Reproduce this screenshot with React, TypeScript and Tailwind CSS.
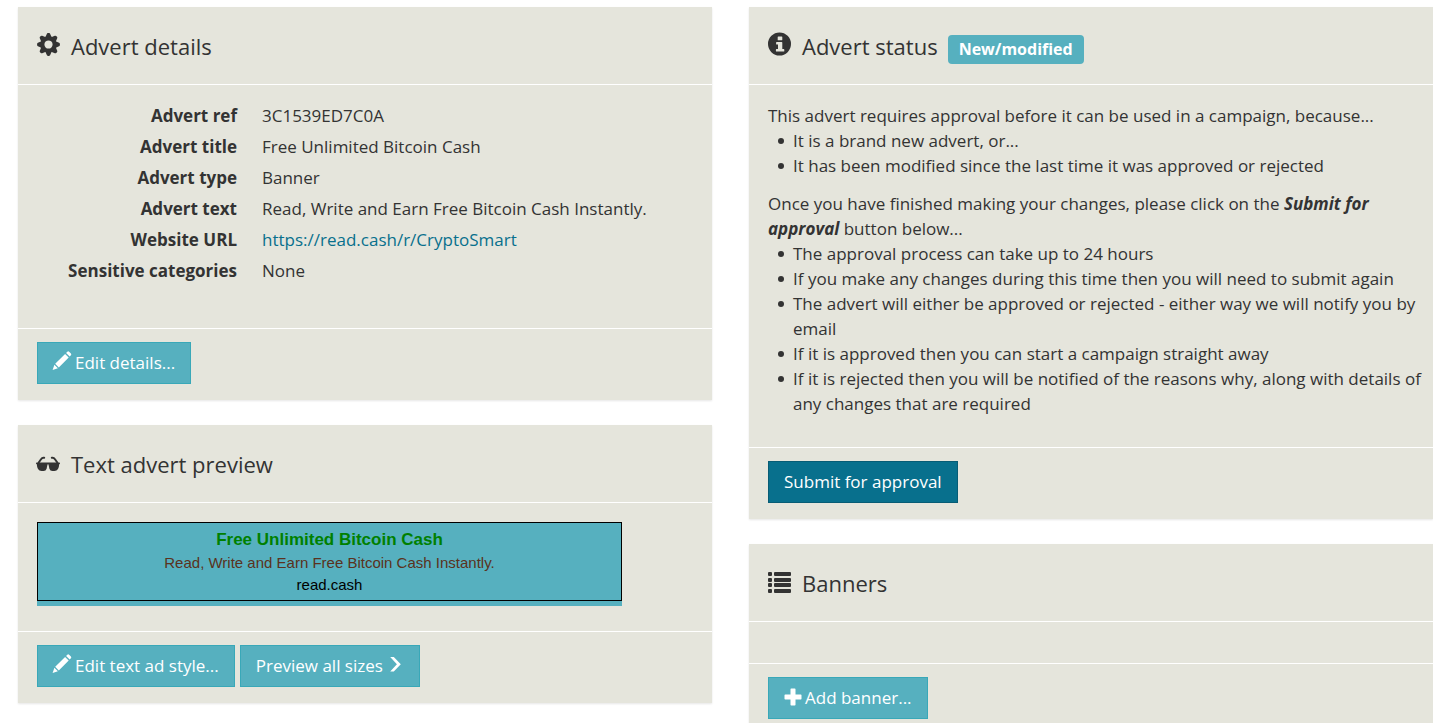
import type { ReactNode } from "react";

function CogIcon() {
  return (
    <svg viewBox="-11.5 -12.5 24 24" className="size-6 shrink-0" fill="currentColor" aria-hidden="true">
      {[0, 45, 90, 135, 180, 225, 270, 315].map((angle) => (
        <path key={angle} transform={`rotate(${angle})`} d="M-3.200-7-1.700-10.600Q-1.400-11.400-.6-11.400H.6Q1.400-11.400 1.700-10.600L3.200-7z" />
      ))}
      <circle r="6.200" fill="none" stroke="currentColor" strokeWidth="4.200" />
    </svg>
  );
}

function InfoIcon() {
  return (
    <svg viewBox="0 0 24 24" className="size-6 shrink-0" fill="currentColor" aria-hidden="true">
      <path
        fillRule="evenodd"
        d="M11.500 .5a11.500 11.500 0 1 0 0 23 11.500 11.500 0 0 0 0-23zM10.300 4.500h3.400q.6 0 .6.600v2.600q0 .6-.6.600h-3.400q-.6 0-.6-.6V5.100q0-.6.600-.6zM8.700 10h5q.6 0 .6.600v6.500h1.400q.6 0 .6.600v1.200q0 .6-.6.600H8.500q-.6 0-.6-.6v-1.200q0-.6.600-.6h1.500v-4.600H8.700q-.6 0-.6-.6v-1.300q0-.6.600-.6z"
      />
    </svg>
  );
}

function SunglassesIcon() {
  return (
    <svg viewBox="1 -2 24 24" className="size-6 shrink-0 overflow-visible" fill="currentColor" aria-hidden="true">
      <path
        d="M8.200 5.700H7.400Q6 5.700 5.200 7L2.700 10.500M15.800 5.700h.8q1.400 0 2.200 1.300l2.500 3.500"
        fill="none"
        stroke="currentColor"
        strokeWidth="2"
        strokeLinecap="round"
      />
      <path d="M.8 10.400q-.8 0-.8.800t.8 1q.2 3.200 1.200 4.900 1.200 1.900 3.600 1.900h2q2.300 0 3-2.200l.9-4.300q.5-.6 1 0l.9 4.300q.7 2.200 3 2.200h2q2.400 0 3.600-1.900 1-1.700 1.200-4.900.8-.2.800-1t-.8-.8z" />
    </svg>
  );
}

function ListIcon() {
  return (
    <svg viewBox="0 0 24 24" className="size-6 shrink-0 overflow-visible" fill="currentColor" aria-hidden="true">
      {[3, 9, 14, 20].map((y) => (
        <g key={y}>
          <rect x="0" y={y} width="4" height="4" rx="1" />
          <rect x="6" y={y} width="17" height="4" rx="1" />
        </g>
      ))}
    </svg>
  );
}

function PencilIcon() {
  return (
    <svg viewBox="1 1 19 20" className="h-5 w-[19px] shrink-0 overflow-visible" fill="currentColor" aria-hidden="true">
      <path d="M15.300.7q.9-.8 1.800 0l1.800 1.800q.8.900 0 1.800l-1.200 1.200-3.600-3.600zM13.100 2.900l3.600 3.600L6.800 16.400l-3.600-3.600zM2.400 13.700l3.500 3.500L.6 18.900z" />
    </svg>
  );
}

function ChevronIcon() {
  return (
    <svg viewBox="0 0 18 18" className="size-[18px] shrink-0" fill="currentColor" aria-hidden="true">
      <path d="M4.200 1h3.600l7 7.300-7 7.200H4.200l6.700-7.200z" />
    </svg>
  );
}

function PlusIcon() {
  return (
    <svg viewBox="0 0 18 18" className="size-[18px] shrink-0" fill="currentColor" aria-hidden="true">
      <path d="M7.200.500h3.600q.7 0 .7.700v5.300h5.300q.7 0 .7.700v3.600q0 .7-.7.700h-5.300v5.300q0 .7-.7.700H7.200q-.7 0-.7-.7v-5.300H1.200q-.7 0-.7-.7V7.200q0-.7.700-.7h5.300V1.200q0-.7.700-.7z" />
    </svg>
  );
}

function Panel({ icon, title, badge, children, actions }: {
  icon: ReactNode;
  title: string;
  badge?: string;
  children?: ReactNode;
  actions: ReactNode;
}) {
  return (
    <section className="bg-[#e5e5dc] shadow-[0_1px_2px_rgba(0,0,0,0.1)]">
      <header className="flex h-[77px] items-center px-[19px]">
        <span className="mr-[10px] mb-[3px]">{icon}</span>
        <h2 className="text-[22px] leading-8">{title}</h2>
        {badge && (
          <span className="mt-2 ml-[10px] rounded bg-[#56b0bf] px-[11px] py-[2px] text-[16px] leading-[25px] font-bold text-white">{badge}</span>
        )}
      </header>
      <div className="border-t border-white pt-[18px] pr-3 pb-[23px] pl-[19px]">{children}</div>
      <footer className="flex gap-[5px] border-t border-white px-[19px] pt-[13px] pb-4">{actions}</footer>
    </section>
  );
}

function Button({ primary, children }: { primary?: boolean; children: ReactNode }) {
  const base = "flex h-[42px] cursor-pointer items-center gap-[3px] border px-[15px] pb-[2px] text-white";
  return (
    <button type="button" className={primary ? `${base} border-[#075c75] bg-[#08708d]` : `${base} border-[#39a8b8] bg-[#56b0bf]`}>
      {children}
    </button>
  );
}

function Bullets({ items }: { items: string[] }) {
  return (
    <ul className="pl-[25px]">
      {items.map((item) => (
        <li
          key={item}
          className="relative before:absolute before:top-[10px] before:-left-[15px] before:size-[6px] before:rounded-full before:bg-[#333]"
        >
          {item}
        </li>
      ))}
    </ul>
  );
}

const details: [string, ReactNode][] = [
  ["Advert ref", "3C1539ED7C0A"],
  ["Advert title", "Free Unlimited Bitcoin Cash"],
  ["Advert type", "Banner"],
  ["Advert text", "Read, Write and Earn Free Bitcoin Cash Instantly."],
  ["Website URL", <a href="https://read.cash/r/CryptoSmart" className="text-[#08708d]">https://read.cash/r/CryptoSmart</a>],
  ["Sensitive categories", "None"],
];

export default function App() {
  return (
    <main className="grid grid-cols-[694fr_684fr] items-start gap-[37px] overflow-hidden bg-white pt-[7px] pl-[18px] font-['Open_Sans',sans-serif] text-[17px] leading-[25px] text-[#333]">
      <div className="flex flex-col gap-[25px]">
        <Panel icon={<CogIcon />} title="Advert details" actions={<Button><PencilIcon />Edit details...</Button>}>
          <dl className="mb-[22px] grid grid-cols-[200px_1fr] gap-x-[25px] gap-y-[6px]">
            {details.map(([label, value]) => (
              <div key={label} className="contents">
                <dt className="text-right font-bold">{label}</dt>
                <dd>{value}</dd>
              </div>
            ))}
          </dl>
        </Panel>
        <Panel
          icon={<SunglassesIcon />}
          title="Text advert preview"
          actions={
            <>
              <Button><PencilIcon />Edit text ad style...</Button>
              <Button>Preview all sizes<ChevronIcon /></Button>
            </>
          }
        >
          <div className="mt-px mb-[2px] max-w-[585px] bg-[#56b0bf] pb-[5px] text-center font-['Liberation_Sans',sans-serif]">
            <div className="border border-black pt-[5px] pb-1">
              <p className="text-[17px] leading-6 font-bold text-[#008000]">Free Unlimited Bitcoin Cash</p>
              <p className="text-[15px] leading-[22px] text-[#5a3220]">Read, Write and Earn Free Bitcoin Cash Instantly.</p>
              <p className="text-[15px] leading-[22px] text-black">read.cash</p>
            </div>
          </div>
        </Panel>
      </div>
      <div className="flex flex-col gap-[25px]">
        <Panel icon={<InfoIcon />} title="Advert status" badge="New/modified" actions={<Button primary>Submit for approval</Button>}>
          <div className="mb-2 flex flex-col gap-[13px]">
            <div>
              <p>This advert requires approval before it can be used in a campaign, because...</p>
              <Bullets
                items={[
                  "It is a brand new advert, or...",
                  "It has been modified since the last time it was approved or rejected",
                ]}
              />
            </div>
            <div>
              <p>Once you have finished making your changes, please click on the <strong className="italic">Submit for approval</strong> button below...</p>
              <Bullets
                items={[
                  "The approval process can take up to 24 hours",
                  "If you make any changes during this time then you will need to submit again",
                  "The advert will either be approved or rejected - either way we will notify you by email",
                  "If it is approved then you can start a campaign straight away",
                  "If it is rejected then you will be notified of the reasons why, along with details of any changes that are required",
                ]}
              />
            </div>
          </div>
        </Panel>
        <Panel icon={<ListIcon />} title="Banners" actions={<Button><PlusIcon />Add banner...</Button>} />
      </div>
    </main>
  );
}
